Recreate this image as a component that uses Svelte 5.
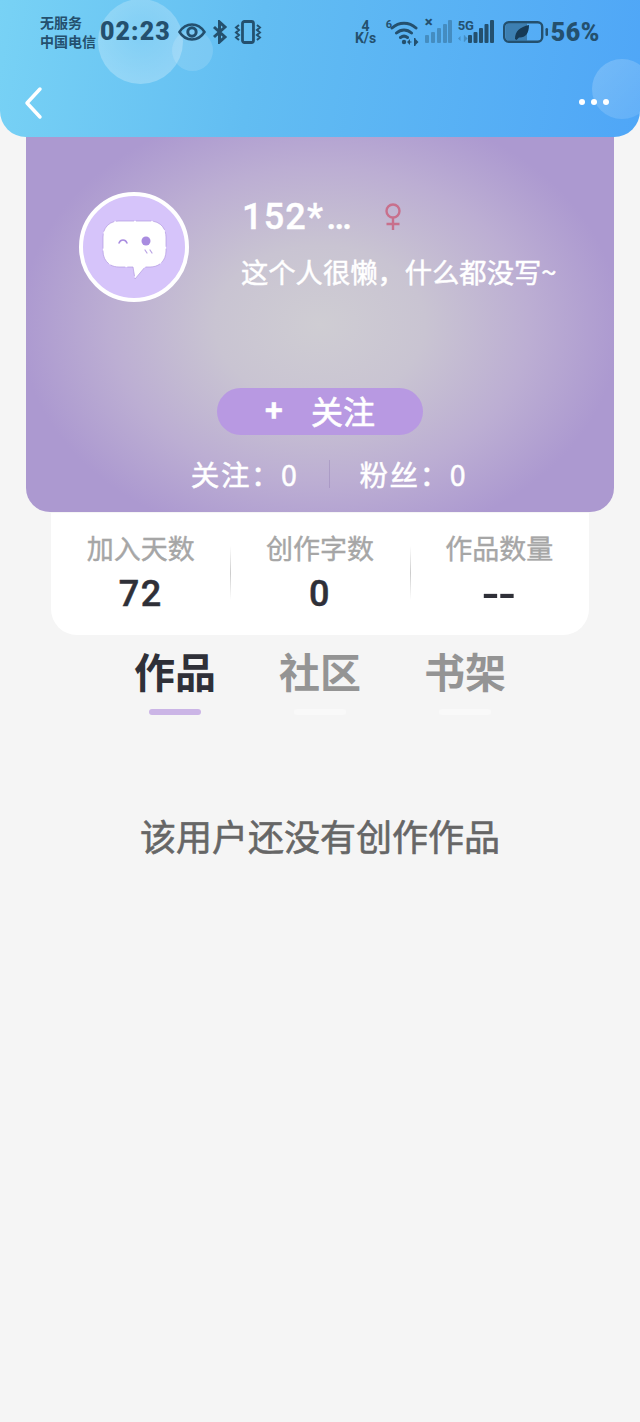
<script>
  const stats = [
    { label: '加入天数', value: '72' },
    { label: '创作字数', value: '0' },
    { label: '作品数量', value: '--' }
  ];
  const tabs = ['作品', '社区', '书架'];
</script>

<div class="page">
  <header class="header">
    <span class="bubble b1"></span>
    <span class="bubble b2"></span>
    <span class="bubble b3"></span>
    <div class="status">
      <div class="carrier"><span>无服务</span><span>中国电信</span></div>
      <div class="time">02:23</div>
      <svg class="eye" viewBox="0 0 28 20" width="28" height="20" fill="none" stroke="#24506e" stroke-width="2.600"><path d="M1.500 10C5 4.500 9 2.500 14 2.500S23 4.500 26.500 10C23 15.500 19 17.500 14 17.500S5 15.500 1.500 10Z"/><circle cx="14" cy="10" r="4.200" stroke-width="3"/></svg>
      <svg class="bt" viewBox="0 0 16 24" width="16" height="24" fill="none" stroke="#24506e" stroke-width="3"><path d="M2 7l11 10-5.500 5V2L13 7 2 17"/></svg>
      <svg class="vib" viewBox="0 0 28 24" width="28" height="24" fill="none" stroke="#24506e"><rect x="8.500" y="1.500" width="11" height="21" rx="2" stroke-width="2.800"/><path stroke-width="2" d="M5 5L2 7.500 5 10 2 12.500 5 15 2 17.500 5 20M23 5l3 2.500L23 10l3 2.500L23 15l3 2.500L23 20"/></svg>

      <div class="right">
        <div class="speed"><span>4</span><span>K/s</span></div>
        <div class="wifi">
          <span class="six">6</span>
          <svg viewBox="0 0 28 26" width="28" height="26" fill="none" stroke="#24506e" stroke-width="3" stroke-linecap="round"><path d="M2 9C9 2.500 19 2.500 26 9M6.500 14C11 10 17 10 21.500 14M10.500 18.500C13 16.500 15 16.500 17.500 18.500"/><circle cx="14" cy="23" r="2.200" fill="#24506e" stroke="none"/></svg>
          <svg class="arrows" viewBox="0 0 12 8" width="12" height="8" fill="#24506e"><path d="M0 4l3-3v6zM3 3.400h1.500v1.200H3zM7 0h1.500v8H7zM8.500 1l3 3-3 3z"/></svg>
        </div>
        <div class="sim1">
          <span class="x">×</span>
          <svg viewBox="0 0 27 24" width="27" height="24" fill="#24506e" opacity=".38"><rect x="0" y="15" width="4" height="8" rx="1"/><rect x="6" y="12" width="4" height="11" rx="1"/><rect x="12" y="8" width="4" height="15" rx="1"/><rect x="18" y="4" width="4" height="19" rx="1"/><rect x="23" y="0" width="4" height="23" rx="1"/></svg>
        </div>
        <div class="sim2">
          <span class="fiveg">5G</span>
          <svg class="arrows2" viewBox="0 0 12 8" width="10" height="7" fill="#24506e" opacity=".35"><path d="M0 4l3-3v6zM7 0h1.500v8H7zM8.500 1l3 3-3 3z"/></svg>
          <svg class="bars" viewBox="0 0 26 24" width="26" height="24" fill="#24506e"><rect x="0" y="15" width="4" height="8" rx="1"/><rect x="5.500" y="12" width="4" height="11" rx="1"/><rect x="11" y="8" width="4" height="15" rx="1"/><rect x="16.500" y="4" width="4" height="19" rx="1"/><rect x="22" y="0" width="4" height="23" rx="1"/></svg>
        </div>
        <svg class="battery" viewBox="0 0 46 24" width="46" height="24"><rect x="1.200" y="2.200" width="38" height="19.600" rx="4.500" fill="none" stroke="#24506e" stroke-width="2.400"/><path d="M3 5.500a2 2 0 012-2h19v17H5a2 2 0 01-2-2z" fill="#24506e" opacity=".5"/><path d="M12 19c0-8 5-12 14-14 0 9-4 13-10 12.500L13.500 20z" fill="#163a56"/><rect x="42.500" y="8" width="2.500" height="8" rx="1.200" fill="#24506e"/></svg>
        <div class="pct">56%</div>
      </div>
    </div>
    <div class="nav">
      <svg viewBox="0 0 20 34" width="20" height="34" fill="none" stroke="#fff" stroke-width="3.500" stroke-linecap="round" stroke-linejoin="round"><path d="M16 3L3 17l13 14"/></svg>
      <div class="dots"><i></i><i></i><i></i></div>
    </div>
  </header>

  <section class="card">
    <div class="profile">
      <div class="avatar">
        <svg viewBox="0 0 102 102" width="102" height="102">
          <path d="M36 25h31c10 0 16 7 16 16v14c0 9-6 16-16 16h-5L52 83l-2-12H36c-10 0-16-7-16-16V41c0-9 6-16 16-16z" fill="#fff" stroke="#b29ae0" stroke-opacity=".7" stroke-width="1" stroke-dasharray="15 2"/>
          <path d="M36 47c1.500-4 6.500-4 8 0" fill="none" stroke="#a98ce0" stroke-width="1.500" stroke-linecap="round"/>
          <circle cx="63" cy="45" r="4.500" fill="#a98ce0"/>
          <path d="M62 54l2 3M67 54l2 3" stroke="#b9a2e4" stroke-width="1.200" stroke-linecap="round"/>
        </svg>
      </div>
      <div class="info">
        <div class="nameRow">
          <span class="name">152*<span class="ell">…</span></span>
          <svg viewBox="0 0 18 28" width="18" height="28" fill="none" stroke="#c8708c" stroke-width="2.400"><circle cx="9" cy="8" r="6.500"/><path d="M9 14.500V27M2.500 21h13"/></svg>
        </div>
        <div class="bio">这个人很懒，什么都没写~</div>
      </div>
    </div>
    <div class="follow"><span class="plus">+</span><span>关注</span></div>
    <div class="counts">
      <span>关注：0</span>
      <i class="vline"></i>
      <span>粉丝：0</span>
    </div>
  </section>

  <section class="stats">
    {#each stats as s, i}
      <div class="stat" class:sep={i > 0}>
        <div class="label">{s.label}</div>
        <div class="value" class:dash={s.value === '--'}>{s.value}</div>
      </div>
    {/each}
  </section>

  <nav class="tabs">
    {#each tabs as t, i}
      <div class="tab" class:active={i === 0}>
        <div class="tabText">{t}</div>
        <div class="bar"></div>
      </div>
    {/each}
  </nav>

  <p class="empty">该用户还没有创作作品</p>
</div>

<style>
  :global(body) {
    margin: 0;
    background: #f5f5f5;
  }
  .page {
    width: 640px;
    height: 1422px;
    overflow: hidden;
    background: #f5f5f5;
    font-family: "Noto Sans CJK SC", Roboto, sans-serif;
  }
  .header {
    position: relative;
    height: 137px;
    box-sizing: border-box;
    overflow: hidden;
    padding: 12px 40px 0;
    background: linear-gradient(100deg, #78d2f5 0%, #62bdf2 40%, #4fa6f7 100%);
    border-radius: 0 0 26px 26px;
  }
  .bubble {
    position: absolute;
    border-radius: 50%;
  }
  .b1 {
    left: 98px;
    top: -1px;
    width: 85px;
    height: 85px;
    background: radial-gradient(circle at 50% 40%, rgba(255,255,255,.14), rgba(255,255,255,.3));
  }
  .b2 {
    left: 172px;
    top: 30px;
    width: 41px;
    height: 41px;
    background: rgba(255,255,255,.14);
  }
  .b3 {
    left: 592px;
    top: 59px;
    width: 60px;
    height: 60px;
    background: linear-gradient(135deg, rgba(255,255,255,.2), rgba(255,255,255,.1));
  }
  .status {
    position: relative;
    display: flex;
    align-items: center;
    height: 40px;
    color: #24506e;
  }
  .carrier {
    display: flex;
    flex-direction: column;
    width: 60px;
    font-size: 14px;
    font-weight: 700;
    line-height: 19px;
    white-space: nowrap;
  }
  .time {
    width: 78px;
    font: 900 25px/1 Roboto, sans-serif;
    letter-spacing: 1.100px;
    margin-top: -2px;
  }
  .eye { margin-top: -1px; }
  .bt { margin-left: 6px; margin-top: -1px; }
  .vib { margin-left: 6px; margin-top: -1px; }
  .right {
    display: flex;
    align-items: center;
    margin-left: 92px;
  }
  .speed {
    display: flex;
    flex-direction: column;
    align-items: center;
    width: 24px;
    font: 700 14px/12px Roboto, sans-serif;
  }
  .wifi {
    position: relative;
    width: 32px;
    height: 26px;
    margin-left: 8px;
  }
  .wifi > svg:first-of-type {
    position: absolute;
    left: 4px;
    top: 0;
  }
  .six {
    position: absolute;
    left: 0;
    top: 0;
    font: 700 11px/12px Roboto, sans-serif;
  }
  .arrows {
    position: absolute;
    left: 21px;
    top: 19px;
  }
  .sim1 {
    position: relative;
    width: 27px;
    height: 24px;
    margin-left: 7px;
  }
  .x {
    position: absolute;
    left: 0;
    top: -5px;
    font: 900 15px/14px Roboto, sans-serif;
  }
  .sim2 {
    position: relative;
    width: 36px;
    height: 24px;
    margin-left: 6px;
  }
  .fiveg {
    position: absolute;
    left: 0;
    top: -1px;
    font: 700 13px/13px Roboto, sans-serif;
  }
  .arrows2 {
    position: absolute;
    left: 0;
    top: 15px;
  }
  .bars {
    position: absolute;
    left: 10px;
    top: 0;
  }
  .battery { margin-left: 9px; }
  .pct {
    margin-left: 2px;
    font: 900 25px/1 Roboto, sans-serif;
    letter-spacing: .6px;
  }
  .nav {
    position: relative;
    display: flex;
    align-items: center;
    justify-content: space-between;
    margin: 34px -9px 0 -16px;
    height: 34px;
  }
  .dots {
    display: flex;
    gap: 6px;
    margin-top: -2px;
  }
  .dots i {
    width: 6px;
    height: 6px;
    border-radius: 50%;
    background: #fff;
  }
  .card {
    box-sizing: border-box;
    width: 588px;
    height: 375px;
    margin: 0 auto;
    padding-top: 55px;
    border-radius: 0 0 24px 24px;
    background: radial-gradient(ellipse 300px 225px at 50% 50%, #cfcdd3 0%, #c9c4d2 35%, #bcaed3 70%, #ac99d0 100%);
    color: #fff;
  }
  .profile {
    display: flex;
    height: 196px;
    padding-left: 53px;
  }
  .avatar {
    box-sizing: border-box;
    flex: none;
    width: 110px;
    height: 110px;
    border: 4px solid #fff;
    border-radius: 50%;
    background: #d6c4fa;
  }
  .avatar svg { display: block; }
  .info {
    margin-left: 52px;
    margin-top: 5px;
  }
  .nameRow {
    display: flex;
    align-items: center;
    height: 40px;
    margin-left: 1px;
  }
  .name {
    width: 142px;
    font: 500 36px/40px Roboto, sans-serif;
    letter-spacing: 1.200px;
    -webkit-text-stroke: .4px #fff;
  }
  .ell { margin-left: 2px; }
  .bio {
    margin-top: 17px;
    font-size: 27.300px;
    line-height: 34px;
    white-space: nowrap;
    -webkit-text-stroke: .5px #fff;
  }
  .follow {
    display: flex;
    align-items: center;
    justify-content: center;
    gap: 28px;
    width: 206px;
    height: 47px;
    box-sizing: border-box;
    padding-bottom: 4px;
    margin: 0 auto;
    border-radius: 24px;
    background: #b899e2;
    font-size: 32px;
    -webkit-text-stroke: .6px #fff;
  }
  .plus {
    font: 500 32px/1 Roboto, sans-serif;
  }
  .counts {
    display: flex;
    align-items: center;
    justify-content: center;
    gap: 30px;
    height: 34px;
    margin: 22px 0 0 18px;
    font-size: 28.500px;
    line-height: 34px;
    letter-spacing: 1.600px;
    -webkit-text-stroke: .5px #fff;
  }
  .vline {
    width: 1px;
    height: 28px;
    background: rgba(120, 95, 160, .25);
  }
  .stats {
    display: grid;
    grid-template-columns: repeat(3, 1fr);
    box-sizing: border-box;
    width: 538px;
    height: 122px;
    margin: 1px auto 0;
    padding-top: 16px;
    background: #fff;
    border-radius: 0 0 26px 26px;
  }
  .stat {
    position: relative;
    text-align: center;
  }
  .stat.sep::before {
    content: "";
    position: absolute;
    left: 0;
    top: 17px;
    height: 54px;
    width: 1px;
    background: linear-gradient(180deg, transparent, #ccc 50%, transparent);
  }
  .label {
    font-size: 27px;
    line-height: 38px;
    color: #a6a6a6;
    -webkit-text-stroke: .4px #a6a6a6;
  }
  .value {
    margin-top: 5px;
    font: 500 36px/44px Roboto, sans-serif;
    letter-spacing: 1.500px;
    color: #2f3038;
    -webkit-text-stroke: .5px #2f3038;
  }
  .value.dash {
    font-weight: 400;
    font-size: 56px;
    letter-spacing: 1px;
    -webkit-text-stroke: 0;
  }
  .tabs {
    display: flex;
    justify-content: center;
    margin-top: 9px;
  }
  .tab {
    width: 145px;
    text-align: center;
  }
  .tabText {
    font-size: 41px;
    font-weight: 700;
    line-height: 52px;
    color: #949494;
  }
  .tab.active .tabText { color: #2f3038; }
  .bar {
    width: 52px;
    height: 6px;
    margin: 13px auto 0;
    border-radius: 3px;
    background: #f9f9f9;
  }
  .tab.active .bar { background: #cbb5e6; }
  .empty {
    margin: 96px 0 0;
    text-align: center;
    font-size: 36px;
    line-height: 48px;
    color: #666;
    -webkit-text-stroke: .6px #666;
  }
</style>
